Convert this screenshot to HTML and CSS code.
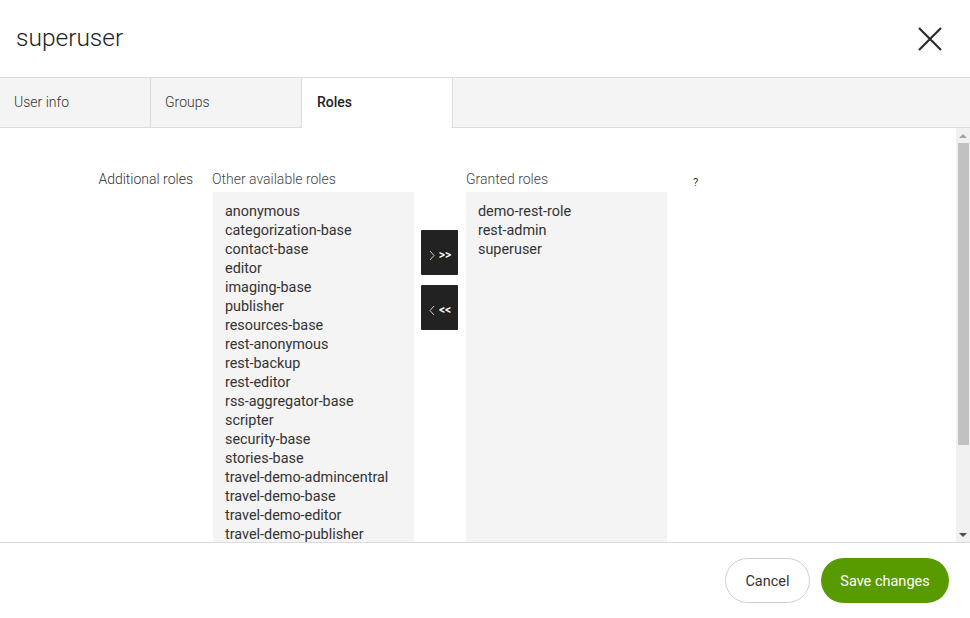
FILE: index.html
```html
<!DOCTYPE html>
<html>
<head>
<meta charset="utf-8">
<link rel="stylesheet" href="styles.css">
</head>
<body>
<div class="dialog">
  <header class="header">
    <h1 class="title">superuser</h1>
    <button class="close" aria-label="Close">
      <svg width="26" height="26" viewBox="0 0 26 26"><path d="M2 2 L24 24 M24 2 L2 24" stroke="#2b2b2b" stroke-width="2.2" fill="none"/></svg>
    </button>
  </header>
  <nav class="tabs">
    <div class="tab">User info</div>
    <div class="tab">Groups</div>
    <div class="tab active">Roles</div>
  </nav>
  <div class="body">
    <main class="content">
      <div class="form-row">
        <div class="label">Additional roles</div>
        <div class="twin">
          <div class="col">
            <div class="caption">Other available roles</div>
            <ul class="list">
              <li>anonymous</li>
              <li>categorization-base</li>
              <li>contact-base</li>
              <li>editor</li>
              <li>imaging-base</li>
              <li>publisher</li>
              <li>resources-base</li>
              <li>rest-anonymous</li>
              <li>rest-backup</li>
              <li>rest-editor</li>
              <li>rss-aggregator-base</li>
              <li>scripter</li>
              <li>security-base</li>
              <li>stories-base</li>
              <li>travel-demo-admincentral</li>
              <li>travel-demo-base</li>
              <li>travel-demo-editor</li>
              <li>travel-demo-publisher</li>
            </ul>
          </div>
          <div class="moves">
            <button class="move"><svg width="6" height="11" viewBox="0 0 6 11"><path d="M1 1 L5 5.5 L1 10" stroke="#e0e0e0" stroke-width="0.9" fill="none"/></svg><span>&gt;&gt;</span></button>
            <button class="move"><svg width="6" height="11" viewBox="0 0 6 11"><path d="M5 1 L1 5.5 L5 10" stroke="#e0e0e0" stroke-width="0.9" fill="none"/></svg><span>&lt;&lt;</span></button>
          </div>
          <div class="col">
            <div class="caption">Granted roles</div>
            <ul class="list">
              <li>demo-rest-role</li>
              <li>rest-admin</li>
              <li>superuser</li>
            </ul>
          </div>
          <div class="help">?</div>
        </div>
      </div>
    </main>
    <div class="scrollbar">
      <div class="arrow arrow-up"></div>
      <div class="track"><div class="thumb"></div></div>
      <div class="arrow arrow-down"></div>
    </div>
  </div>
  <footer class="footer">
    <button class="btn btn-cancel">Cancel</button>
    <button class="btn btn-save">Save changes</button>
  </footer>
</div>
</body>
</html>
```
FILE: styles.css
```css
* { box-sizing: border-box; }
html, body { margin: 0; padding: 0; }
body {
  font-family: Roboto, "Liberation Sans", sans-serif;
  color: #333;
  background: #fff;
  width: 970px;
  height: 618px;
  overflow: hidden;
}
.dialog {
  display: flex;
  flex-direction: column;
  height: 618px;
}
.header {
  height: 78px;
  border-bottom: 1px solid #dcdcdc;
  display: flex;
  align-items: center;
  justify-content: space-between;
  padding: 0 27px 0 16px;
  flex: none;
}
.title {
  margin: 0;
  font-weight: 300;
  font-size: 24.5px;
  color: #222;
  padding-bottom: 2px;
}
.close {
  border: 0;
  background: none;
  padding: 0;
  width: 26px;
  height: 26px;
  margin-top: 1px;
}
.tabs {
  display: flex;
  height: 50px;
  background: #f4f4f4;
  border-bottom: 1px solid #dcdcdc;
  flex: none;
}
.tab {
  width: 151px;
  height: 50px;
  border-right: 1px solid #dcdcdc;
  border-radius: 0 0 3px 0;
  font-size: 14px;
  font-weight: 300;
  color: #333;
  padding: 16px 0 0 14px;
  margin-bottom: -1px;
  border-bottom: 1px solid #dcdcdc;
}
.tab.active {
  background: #fff;
  font-weight: 500;
  color: #222;
  border-bottom-color: #fff;
  padding-left: 15px;
}
.body {
  flex: 1;
  display: flex;
  min-height: 0;
  border-bottom: 1px solid #dcdcdc;
}
.content {
  flex: 1;
  overflow: hidden;
}
.form-row {
  display: flex;
  padding-top: 43px;
}
.label {
  width: 193px;
  text-align: right;
  font-size: 14px;
  font-weight: 300;
  line-height: 16px;
  color: #333;
}
.twin {
  display: flex;
  margin-left: 19px;
}
.col {
  display: flex;
  flex-direction: column;
}
.col:first-child .list { margin-left: 1px; }
.caption {
  font-size: 14px;
  font-weight: 300;
  line-height: 16px;
  height: 21px;
  color: #444;
}
.list {
  list-style: none;
  margin: 0;
  padding: 10px 12px;
  width: 201px;
  height: 446px;
  background: #f4f4f4;
  font-size: 14.4px;
  line-height: 19px;
  color: #333;
}
.moves {
  display: flex;
  flex-direction: column;
  gap: 10px;
  padding-top: 59px;
  margin: 0 8px 0 7px;
}
.move {
  width: 37px;
  height: 45px;
  background: #222;
  border: 0;
  border-radius: 1px;
  color: #fff;
  display: flex;
  align-items: center;
  justify-content: center;
  gap: 4px;
  padding: 5px 0 0 1px;
  font-family: Roboto, sans-serif;
  font-weight: 500;
  font-size: 12px;
}
.help {
  margin-left: 26px;
  padding-top: 5px;
  font-size: 11px;
  color: #333;
}
.scrollbar {
  width: 14px;
  background: #f1f1f1;
  display: flex;
  flex-direction: column;
  flex: none;
}
.arrow {
  height: 15px;
  display: flex;
  align-items: center;
  justify-content: center;
}
.arrow-up::before {
  content: "";
  border-left: 4px solid transparent;
  border-right: 4px solid transparent;
  border-bottom: 4px solid #a3a3a3;
}
.arrow-down::before {
  content: "";
  border-left: 4px solid transparent;
  border-right: 4px solid transparent;
  border-top: 4px solid #505050;
}
.track {
  flex: 1;
  padding: 0 1px 0 2px;
}
.thumb {
  height: 302px;
  background: #c1c1c1;
}
.footer {
  height: 75px;
  display: flex;
  justify-content: flex-end;
  align-items: center;
  gap: 11px;
  padding: 0 21px 1px 0;
  flex: none;
}
.btn {
  height: 45px;
  border-radius: 23px;
  font-family: Roboto, sans-serif;
  font-size: 14.5px;
  padding-top: 3px;
}
.btn-cancel {
  width: 85px;
  background: #fff;
  border: 1px solid #cfcfcf;
  color: #333;
}
.btn-save {
  width: 128px;
  background: #589b00;
  border: 0;
  color: #fff;
}
```
